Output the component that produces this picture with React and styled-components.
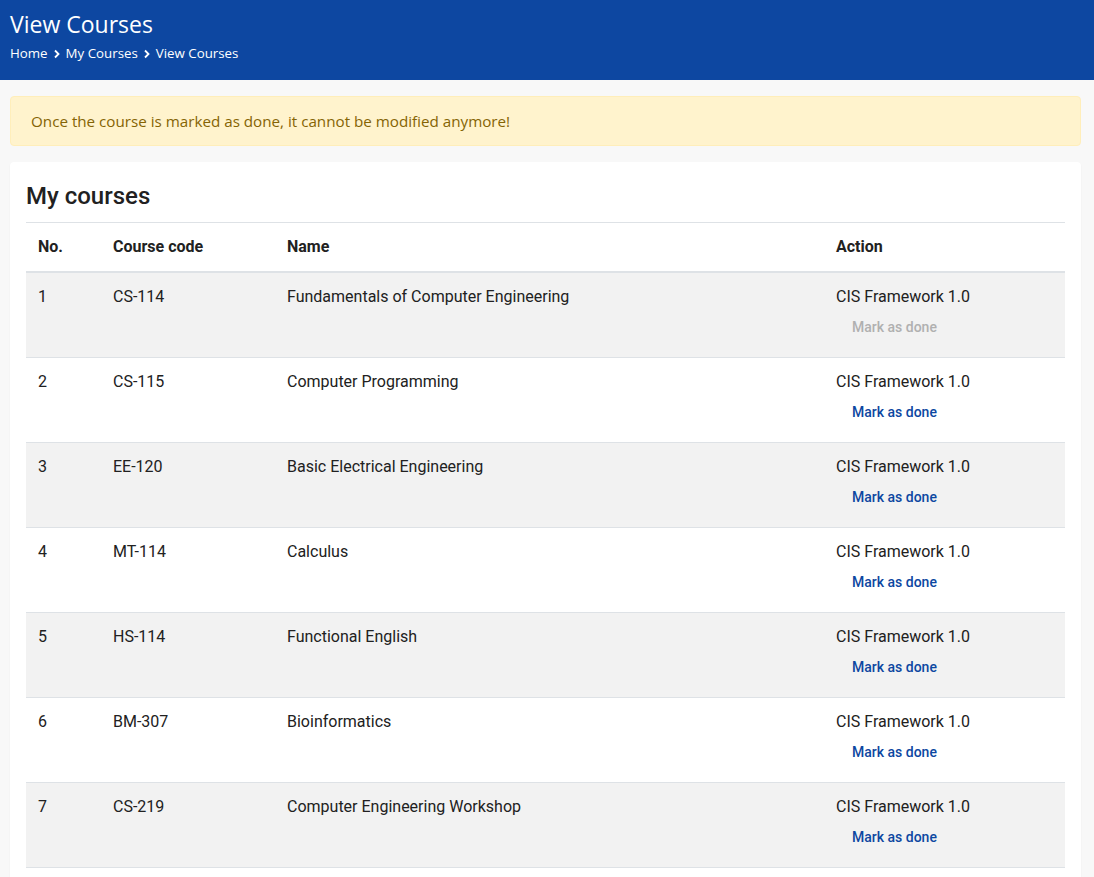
import React from 'react';
import styled, { createGlobalStyle } from 'styled-components';

const GlobalStyle = createGlobalStyle`
  body {
    margin: 0;
    background: #f8f8f8;
    font-family: 'Open Sans', 'Noto Sans', sans-serif;
  }
`;

const Header = styled.header`
  background: #0d47a1;
  color: #fff;
  height: 80px;
  box-sizing: border-box;
  padding: 8px 10px 0 10px;
`;

const PageTitle = styled.h1`
  margin: 0;
  font-size: 23px;
  font-weight: 400;
  line-height: 32px;
`;

const Crumbs = styled.nav`
  display: flex;
  align-items: center;
  gap: 5px;
  margin-top: 3px;
  font-size: 13.3px;
  line-height: 20px;
`;

const Chevron = () => (
  <svg width="8" height="10" viewBox="0 0 8 10" style={{ marginTop: 2 }}>
    <path d="M2 1.5 L5.5 5 L2 8.5" fill="none" stroke="#fff" strokeWidth="1.8" />
  </svg>
);

const Main = styled.main`
  padding: 16px 13px 0 10px;
  display: flex;
  flex-direction: column;
  gap: 16px;
`;

const Alert = styled.div`
  background: #fff3cd;
  border: 1px solid #ffeeba;
  border-radius: 4px;
  color: #856404;
  font-size: 15.2px;
  line-height: 22px;
  padding: 13px 20px;
`;

const Card = styled.section`
  background: #fff;
  border-radius: 4px;
  box-shadow: 0 1px 2px rgba(0, 0, 0, 0.06);
  padding: 16px;
  font-family: Roboto, 'Liberation Sans', sans-serif;
  color: #212121;
`;

const CardTitle = styled.h2`
  margin: 0 0 8px 0;
  font-size: 24px;
  font-weight: 500;
  line-height: 36px;
`;

const Table = styled.table`
  width: 100%;
  border-collapse: collapse;
  font-size: 16px;
  table-layout: fixed;
`;

const Th = styled.th`
  text-align: left;
  font-weight: 700;
  font-size: 16px;
  padding: 12px;
  line-height: 24px;
  border-top: 1px solid #dee2e6;
  border-bottom: 2px solid #dee2e6;
  width: ${(p) => p.$w || 'auto'};
`;

const Row = styled.tr`
  background: ${(p) => (p.$odd ? '#f2f2f2' : '#fff')};
  border-bottom: 1px solid #dee2e6;
`;

const Td = styled.td`
  padding: 12px;
  vertical-align: top;
  line-height: 24px;
`;

const DoneButton = styled.button`
  display: block;
  background: none;
  border: none;
  padding: 6px 16px;
  font-family: Roboto, 'Liberation Sans', sans-serif;
  font-size: 14px;
  font-weight: 500;
  line-height: 24px;
  color: ${(p) => (p.disabled ? '#b0b0b0' : '#0d47a1')};
  cursor: ${(p) => (p.disabled ? 'default' : 'pointer')};
`;

const courses = [
  ['CS-114', 'Fundamentals of Computer Engineering', true],
  ['CS-115', 'Computer Programming'],
  ['EE-120', 'Basic Electrical Engineering'],
  ['MT-114', 'Calculus'],
  ['HS-114', 'Functional English'],
  ['BM-307', 'Bioinformatics'],
  ['CS-219', 'Computer Engineering Workshop'],
];

export default function App() {
  return (
    <>
      <GlobalStyle />
      <Header>
        <PageTitle>View Courses</PageTitle>
        <Crumbs>
          <span>Home</span>
          <Chevron />
          <span>My Courses</span>
          <Chevron />
          <span>View Courses</span>
        </Crumbs>
      </Header>
      <Main>
        <Alert>Once the course is marked as done, it cannot be modified anymore!</Alert>
        <Card>
          <CardTitle>My courses</CardTitle>
          <Table>
            <thead>
              <tr>
                <Th $w="51px">No.</Th>
                <Th $w="150px">Course code</Th>
                <Th>Name</Th>
                <Th $w="217px">Action</Th>
              </tr>
            </thead>
            <tbody>
              {courses.map(([code, name, done], i) => (
                <Row key={code} $odd={i % 2 === 0}>
                  <Td>{i + 1}</Td>
                  <Td>{code}</Td>
                  <Td>{name}</Td>
                  <Td>
                    CIS Framework 1.0
                    <DoneButton disabled={done}>Mark as done</DoneButton>
                  </Td>
                </Row>
              ))}
            </tbody>
          </Table>
        </Card>
      </Main>
    </>
  );
}
